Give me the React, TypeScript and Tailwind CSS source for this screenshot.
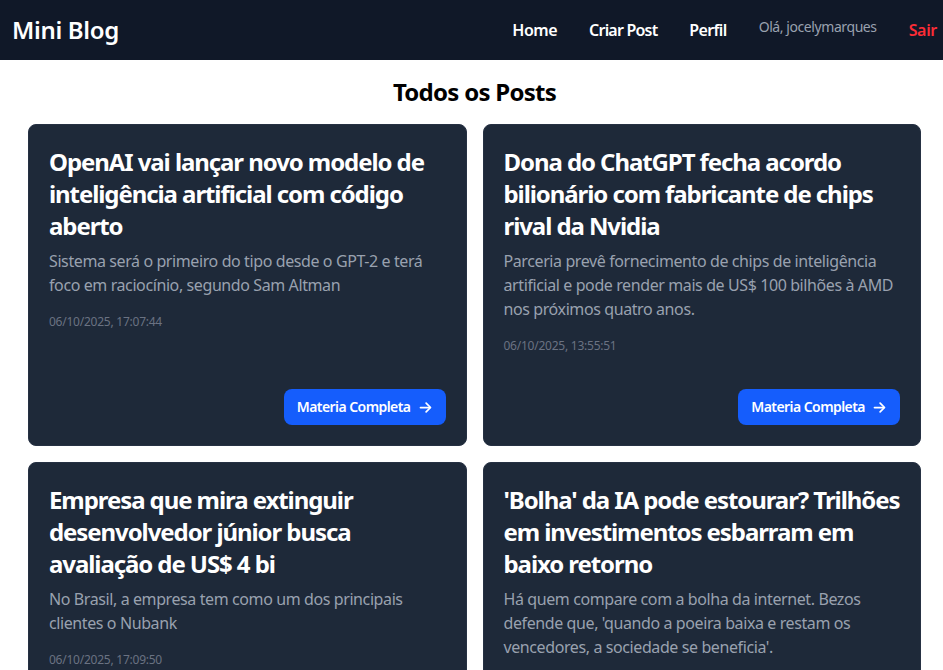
import React from "react";

type Post = { title: string[]; desc: string[]; date: string };

const posts: Post[] = [
  {
    title: ["OpenAI vai lançar novo modelo de", "inteligência artificial com código", "aberto"],
    desc: ["Sistema será o primeiro do tipo desde o GPT-2 e terá", "foco em raciocínio, segundo Sam Altman"],
    date: "06/10/2025, 17:07:44",
  },
  {
    title: ["Dona do ChatGPT fecha acordo", "bilionário com fabricante de chips", "rival da Nvidia"],
    desc: [
      "Parceria prevê fornecimento de chips de inteligência",
      "artificial e pode render mais de US$ 100 bilhões à AMD",
      "nos próximos quatro anos.",
    ],
    date: "06/10/2025, 13:55:51",
  },
  {
    title: ["Empresa que mira extinguir", "desenvolvedor júnior busca", "avaliação de US$ 4 bi"],
    desc: ["No Brasil, a empresa tem como um dos principais", "clientes o Nubank"],
    date: "06/10/2025, 17:09:50",
  },
  {
    title: ["'Bolha' da IA pode estourar? Trilhões", "em investimentos esbarram em", "baixo retorno"],
    desc: [
      "Há quem compare com a bolha da internet. Bezos",
      "defende que, 'quando a poeira baixa e restam os",
      "vencedores, a sociedade se beneficia'.",
    ],
    date: "06/10/2025, 16:41:12",
  },
];

function Card({ p }: { p: Post }) {
  return (
    <div className="flex flex-col rounded-lg border border-[#263143] bg-[#1e2939] px-5 pt-[21px] pb-5">
      <h2 className="mb-[7px] text-2xl leading-8 font-bold tracking-[-0.045em] whitespace-nowrap text-white">
        {p.title.map((l, i) => (
          <span key={i} className="block">
            {l}
          </span>
        ))}
      </h2>
      <p className="text-base leading-6 tracking-[-0.025em] whitespace-nowrap text-[#99a1af]">
        {p.desc.map((l, i) => (
          <span key={i} className="block">
            {l}
          </span>
        ))}
      </p>
      <p className="mt-[17px] text-xs leading-4 tracking-[-0.02em] text-[#6a7282]">{p.date}</p>
      <div className="mt-auto flex justify-end pt-[35px]">
        <button className="flex h-9 items-center gap-[7px] rounded-lg bg-[#155dfc] px-[13px] text-sm font-semibold tracking-[-0.04em] text-white">
          Materia Completa
          <svg width="15" height="15" viewBox="0 0 24 24" fill="none" stroke="currentColor" strokeWidth="2.8" strokeLinecap="round" strokeLinejoin="round">
            <path d="M4 12h15" />
            <path d="M13 5l7 7-7 7" />
          </svg>
        </button>
      </div>
    </div>
  );
}

export default function App() {
  return (
    <div className="w-full overflow-hidden bg-white" style={{ fontFamily: '"Segoe UI", "Noto Sans", "Open Sans", sans-serif' }}>
      <div className="w-[949px] tracking-[-0.02em]">
        <header className="flex h-[60px] items-center justify-between bg-[#101828] px-3">
          <span className="text-2xl font-semibold text-white">Mini Blog</span>
          <nav className="flex items-center gap-8">
            <a className="text-base font-semibold tracking-[-0.03em] text-white">Home</a>
            <a className="text-base font-semibold tracking-[-0.05em] text-white">Criar Post</a>
            <a className="text-base font-semibold tracking-[-0.04em] text-white">Perfil</a>
            <span className="mb-[6px] text-sm tracking-[-0.03em] text-[#99a1af]">Olá, jocelymarques</span>
            <a className="text-base font-semibold text-[#fb2c36]">Sair</a>
          </nav>
        </header>
        <main className="px-7 py-4">
          <h1 className="mb-4 text-center text-2xl leading-8 font-bold tracking-[-0.03em] text-black">Todos os Posts</h1>
          <div className="grid grid-cols-2 gap-4">
            {posts.map((p, i) => (
              <Card key={i} p={p} />
            ))}
          </div>
        </main>
      </div>
    </div>
  );
}
